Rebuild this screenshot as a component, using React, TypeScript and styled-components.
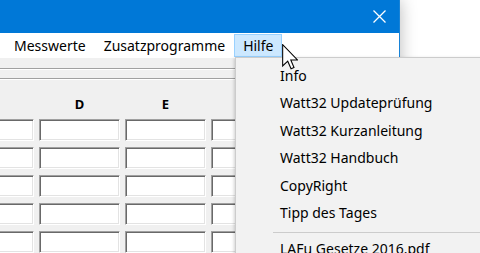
import React from 'react'
import styled, { createGlobalStyle } from 'styled-components'

const Global = createGlobalStyle`
  body {
    margin: 0;
    font-family: 'Noto Sans', 'Open Sans', sans-serif;
  }
`

const Screen = styled.div`
  position: relative;
  width: 480px;
  height: 253px;
  overflow: hidden;
  background: #fff;
`

const Window = styled.div`
  width: 400px;
  height: 253px;
  display: flex;
  flex-direction: column;
  box-sizing: border-box;
  border-right: 1px solid #1883d7;
  box-shadow: 0 0 16px rgba(0, 0, 0, 0.28);
`

const TitleBar = styled.div`
  height: 33px;
  flex: 0 0 auto;
  background: #0078d7;
  display: flex;
  justify-content: flex-end;
  align-items: center;
`

const CloseButton = styled.div`
  width: 40px;
  height: 33px;
  display: flex;
  align-items: center;
  justify-content: center;
`

const MenuBar = styled.div`
  height: 25px;
  flex: 0 0 auto;
  background: #fff;
  display: flex;
  align-items: center;
  padding-left: 5px;
  font-size: 14px;
  color: #000;
`

const BarItem = styled.div<{ $open?: boolean }>`
  height: 23px;
  line-height: 21px;
  padding: 0 8px;
  box-sizing: border-box;
  border: 1px solid ${(p) => (p.$open ? '#99d1ff' : 'transparent')};
  background: ${(p) => (p.$open ? '#cce8ff' : 'transparent')};
`

const Body = styled.div`
  flex: 1;
  background: #f0f0f0;
  padding-top: 10px;
  overflow: hidden;
`

const Rule = styled.div`
  border-top: 1px solid #a0a0a0;
  border-bottom: 1px solid #fff;
  margin-bottom: 8px;
`

const Columns = styled.div`
  display: grid;
  grid-template-columns: repeat(4, 81px);
  column-gap: 5px;
  margin-left: -47px;
`

const Headers = styled(Columns)`
  padding-top: 7px;
  height: 18px;
  align-items: center;
`

const Header = styled.div`
  text-align: center;
  font-size: 13px;
  font-weight: 700;
  color: #000;
`

const Cells = styled(Columns)`
  margin-top: 6px;
  row-gap: 6px;
`

const Cell = styled.div`
  height: 22px;
  box-sizing: border-box;
  background: #fff;
  border: 1px solid;
  border-color: #a0a0a0 #fff #fff #a0a0a0;
  box-shadow: inset 1px 1px 0 #696969, inset -1px -1px 0 #e3e3e3;
`

const Dropdown = styled.div`
  position: absolute;
  left: 235px;
  top: 57px;
  width: 260px;
  height: 220px;
  box-sizing: border-box;
  background: #f2f2f2;
  border: 1px solid #cccccc;
  box-shadow: -1px 1px 3px rgba(0, 0, 0, 0.18);
  padding-top: 4px;
  font-size: 14px;
  color: #000;
`

const DropItem = styled.div`
  height: 27.4px;
  line-height: 27.4px;
  padding-left: 44px;
  white-space: nowrap;
`

const Separator = styled.div`
  height: 9px;
  margin-left: 37px;
  box-sizing: border-box;
  padding-top: 6px;

  &::after {
    content: '';
    display: block;
    border-top: 1px solid #cccccc;
  }
`

const Pointer = styled.svg`
  position: absolute;
  left: 282px;
  top: 44px;
`

const hilfe = [
  'Info',
  'Watt32 Updateprüfung',
  'Watt32 Kurzanleitung',
  'Watt32 Handbuch',
  'CopyRight',
  'Tipp des Tages',
]

const App = () => {
  const rows = [0, 1, 2, 3, 4]
  return (
    <Screen>
      <Global />
      <Window>
        <TitleBar>
          <CloseButton>
            <svg width="13" height="13" viewBox="0 0 13 13">
              <path d="M0.5 0.5 L12.5 12.5 M12.5 0.5 L0.5 12.5" stroke="#fff" strokeWidth="1.3" />
            </svg>
          </CloseButton>
        </TitleBar>
        <MenuBar>
          <BarItem>Messwerte</BarItem>
          <BarItem>Zusatzprogramme</BarItem>
          <BarItem $open>Hilfe</BarItem>
        </MenuBar>
        <Body>
          <Rule />
          <Rule />
          <Headers>
            <Header />
            <Header>D</Header>
            <Header>E</Header>
            <Header />
          </Headers>
          <Cells>
            {rows.map((r) => [0, 1, 2, 3].map((c) => <Cell key={`${r}-${c}`} />))}
          </Cells>
        </Body>
      </Window>

      <Dropdown>
        {hilfe.map((label) => (
          <DropItem key={label}>{label}</DropItem>
        ))}
        <Separator />
        <DropItem>LAFu Gesetze 2016.pdf</DropItem>
      </Dropdown>

      <Pointer width="16" height="26" viewBox="0 0 12 19.5">
        <path
          d="M0.5 0.5 L0.5 16.5 L4.3 12.9 L6.8 18.6 L9 17.6 L6.6 12 L11.6 12 Z"
          fill="#fff"
          stroke="#000"
          strokeWidth="0.8"
          strokeLinejoin="miter"
        />
      </Pointer>
    </Screen>
  )
}

export default App
